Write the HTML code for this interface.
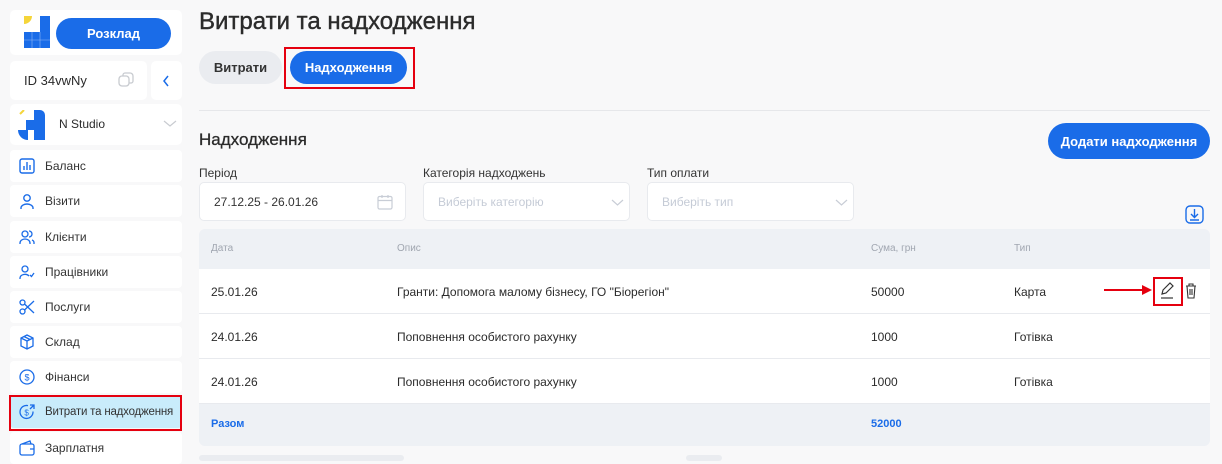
<!DOCTYPE html>
<html><head><meta charset="utf-8"><style>
*{box-sizing:border-box;margin:0;padding:0}
body{width:1222px;height:459px;overflow:hidden;background:#f8f8f9;font-family:"Liberation Sans","DejaVu Sans",sans-serif;color:#2b2b2b;position:relative}
.a{position:absolute}
.card{position:absolute;background:#fff;border-radius:5px}
.mi{position:absolute;left:10px;width:172px;height:32px;background:#fff;border-radius:4px;font-size:12px;color:#333;display:flex;align-items:center;padding-left:35px;white-space:nowrap}
.mi svg{position:absolute;left:9px;top:8px}
.btn{position:absolute;border-radius:18px;display:flex;align-items:center;justify-content:center;font-weight:bold;font-size:13px;white-space:nowrap}
.inp{position:absolute;top:182px;width:207px;height:39px;background:#fff;border:1px solid #e8eaee;border-radius:5px;font-size:12px;display:flex;align-items:center;padding-left:14px}
.lbl{position:absolute;top:166px;font-size:12px;color:#333}
.row{position:absolute;left:199px;width:1011px;height:45px;background:#fff;border-bottom:1px solid #e8eaee;font-size:12px}
.row span{position:absolute;top:16px}
</style></head><body>
<!-- sidebar -->
<div class="card" style="left:10px;top:10px;width:172px;height:45px"></div>
<svg class="a" style="left:24px;top:16px" width="27" height="33" viewBox="0 0 27 33"><path d="M0 0h8a8 8 0 0 1-8 8z" fill="#f5d53a"/><rect x="16" y="0" width="10" height="32" fill="#1a6ce8"/><rect x="0" y="16" width="16" height="16" fill="#1a6ce8"/><path d="M0 24h26M8 16v16M16 16v16" stroke="#fff" stroke-width="0.6" opacity="0.5"/></svg>
<div class="btn" style="left:56px;top:18px;width:115px;height:31px;background:#1a6ce8;color:#fff">Розклад</div>
<div class="card" style="left:10px;top:61px;width:137px;height:39px;font-size:13px;padding:12px 0 0 14px">ID 34vwNy</div>
<svg class="a" style="left:118px;top:72px" width="16" height="16" viewBox="0 0 16 16" fill="none" stroke="#c8cbd0" stroke-width="1.3"><rect x="1" y="4" width="10" height="10" rx="3"/><path d="M5 4V3a2 2 0 0 1 2-2h5a3 3 0 0 1 3 3v5a2 2 0 0 1-2 2h-2"/></svg>
<div class="card" style="left:151px;top:61px;width:31px;height:39px"></div>
<svg class="a" style="left:162px;top:75px" width="8" height="12"><path d="M6 1L2 6l4 5" stroke="#1a6ce8" stroke-width="1.5" fill="none"/></svg>
<div class="card" style="left:10px;top:104px;width:172px;height:41px"></div>
<svg class="a" style="left:18px;top:110px" width="27" height="30" viewBox="0 0 27 30"><path d="M6 0L2 4" stroke="#f5d53a" stroke-width="2"/><path d="M16 0h6a5 5 0 0 1 5 5v25h-11z" fill="#1a6ce8"/><path d="M8 10h8v10H8z" fill="#1a6ce8"/><path d="M0 20h10v10A10 10 0 0 1 0 20z" fill="#1a6ce8"/></svg>
<div class="a" style="left:59px;top:117px;font-size:12px">N Studio</div>
<svg class="a" style="left:163px;top:120px" width="14" height="8"><path d="M1 1l6 5 6-5" stroke="#c8cbd0" stroke-width="1.2" fill="none"/></svg>

<div class="mi" style="top:150px"><svg width="16" height="16" viewBox="0 0 16 16" fill="none" stroke="#1a6ce8" stroke-width="1.4"><rect x="1" y="1" width="14" height="14" rx="2"/><path d="M5 12V8M8 12V4M11 12V7"/></svg>Баланс</div>
<div class="mi" style="top:185px"><svg width="16" height="16" viewBox="0 0 16 16" fill="none" stroke="#1a6ce8" stroke-width="1.4"><circle cx="8" cy="5" r="3.2"/><path d="M2 16v-1a6 4 0 0 1 12 0v1"/></svg>Візити</div>
<div class="mi" style="top:221px"><svg width="16" height="16" viewBox="0 0 16 16" fill="none" stroke="#1a6ce8" stroke-width="1.3"><circle cx="6" cy="5" r="3"/><path d="M1 15v-1a5 4 0 0 1 10 0v1M10 2a3 3 0 0 1 0 6M13 11a3 3 0 0 1 2 3v1"/></svg>Клієнти</div>
<div class="mi" style="top:256px"><svg width="16" height="16" viewBox="0 0 16 16" fill="none" stroke="#1a6ce8" stroke-width="1.3"><circle cx="6" cy="5" r="3"/><path d="M1 15v-1a5 4 0 0 1 9-2M11 11l1.5 1.5L15 9"/></svg>Працівники</div>
<div class="mi" style="top:291px"><svg width="16" height="16" viewBox="0 0 16 16" fill="none" stroke="#1a6ce8" stroke-width="1.3"><circle cx="3.5" cy="3.5" r="2.5"/><circle cx="3.5" cy="12.5" r="2.5"/><path d="M5.5 5L15 14M5.5 11L15 2"/></svg>Послуги</div>
<div class="mi" style="top:326px"><svg width="16" height="16" viewBox="0 0 16 16" fill="none" stroke="#1a6ce8" stroke-width="1.3"><path d="M8 1l6 3v8l-6 3-6-3V4zM2 4l6 3 6-3M8 7v8M5 2.5l6 3"/></svg>Склад</div>
<div class="mi" style="top:361px"><svg width="16" height="16" viewBox="0 0 16 16" fill="none" stroke="#1a6ce8" stroke-width="1.3"><circle cx="8" cy="8" r="7"/><text x="8" y="11.5" font-size="9" text-anchor="middle" fill="#1a6ce8" stroke="none" font-family="Liberation Sans">$</text></svg>Фінанси</div>
<div class="mi" style="top:396px;background:#c9ecfb;font-size:11.5px;letter-spacing:-0.2px"><svg width="16" height="16" viewBox="0 0 16 16" fill="none" stroke="#1a6ce8" stroke-width="1.3"><path d="M14 7.5A6.5 6.5 0 1 1 9 1.6M11 1h4v4M15 1l-4 4"/><text x="7.5" y="11.5" font-size="8" text-anchor="middle" fill="#1a6ce8" stroke="none" font-family="Liberation Sans">$</text></svg>Витрати та надходження</div>
<div class="a" style="left:9px;top:395px;width:173px;height:36px;border:2px solid #e5000f"></div>
<div class="mi" style="top:432px"><svg width="16" height="16" viewBox="0 0 16 16" fill="none" stroke="#1a6ce8" stroke-width="1.3"><rect x="1" y="4" width="14" height="11" rx="2"/><path d="M3 4l8-3 1 3M11 9h4"/></svg>Зарплатня</div>

<!-- main -->
<div class="a" style="left:199px;top:8px;font-size:24px;color:#2b2b2b;-webkit-text-stroke:0.4px #2b2b2b">Витрати та надходження</div>
<div class="btn" style="left:199px;top:51px;width:83px;height:33px;background:#eaecf0;color:#333">Витрати</div>
<div class="btn" style="left:290px;top:51px;width:117px;height:33px;background:#1a6ce8;color:#fff">Надходження</div>
<div class="a" style="left:284px;top:47px;width:131px;height:42px;border:2px solid #e5000f"></div>
<div class="a" style="left:199px;top:110px;width:1011px;height:1px;background:#e6e7ea"></div>
<div class="a" style="left:199px;top:130px;font-size:17px;-webkit-text-stroke:0.3px #2b2b2b">Надходження</div>
<div class="btn" style="left:1048px;top:123px;width:162px;height:36px;background:#1a6ce8;color:#fff">Додати надходження</div>
<div class="lbl" style="left:199px">Період</div>
<div class="lbl" style="left:423px">Категорія надходжень</div>
<div class="lbl" style="left:647px">Тип оплати</div>
<div class="inp" style="left:199px;color:#333">27.12.25 - 26.01.26
<svg class="a" style="left:177px;top:11px" width="16" height="16" viewBox="0 0 16 16" fill="none" stroke="#c8cdd6" stroke-width="1.2"><rect x="1" y="2.5" width="14" height="12.5" rx="1.5"/><path d="M1 6.5h14M5 1v3M11 1v3"/></svg></div>
<div class="inp" style="left:423px;color:#c5cbd6">Виберіть категорію
<svg class="a" style="left:187px;top:16px" width="13" height="8"><path d="M1 1l5.5 5L12 1" stroke="#c8cdd6" stroke-width="1.2" fill="none"/></svg></div>
<div class="inp" style="left:647px;color:#c5cbd6">Виберіть тип
<svg class="a" style="left:187px;top:16px" width="13" height="8"><path d="M1 1l5.5 5L12 1" stroke="#c8cdd6" stroke-width="1.2" fill="none"/></svg></div>
<svg class="a" style="left:1185px;top:205px" width="19" height="19" viewBox="0 0 19 19" fill="none" stroke="#1a6ce8" stroke-width="1.4"><rect x="1" y="1" width="17" height="17" rx="4"/><path d="M9.5 4v8M6 9l3.5 3.5L13 9M5 15h9"/></svg>

<div class="a" style="left:199px;top:229px;width:1011px;height:40px;background:#eef1f5;border-radius:6px 6px 0 0;font-size:10px;color:#a0a6b0">
<span class="a" style="left:12px;top:14px">Дата</span><span class="a" style="left:198px;top:14px">Опис</span><span class="a" style="left:672px;top:14px">Сума, грн</span><span class="a" style="left:815px;top:14px">Тип</span></div>
<div class="row" style="top:269px"><span style="left:12px">25.01.26</span><span style="left:198px">Гранти: Допомога малому бізнесу, ГО "Біорегіон"</span><span style="left:672px">50000</span><span style="left:815px">Карта</span></div>
<div class="row" style="top:314px"><span style="left:12px">24.01.26</span><span style="left:198px">Поповнення особистого рахунку</span><span style="left:672px">1000</span><span style="left:815px">Готівка</span></div>
<div class="row" style="top:359px"><span style="left:12px">24.01.26</span><span style="left:198px">Поповнення особистого рахунку</span><span style="left:672px">1000</span><span style="left:815px">Готівка</span></div>
<div class="a" style="left:199px;top:404px;width:1011px;height:42px;background:#eef1f5;border-radius:0 0 6px 6px;font-size:11px;color:#1a6ce8;font-weight:bold">
<span class="a" style="left:12px;top:14px">Разом</span><span class="a" style="left:672px;top:14px">52000</span></div>
<div class="a" style="left:199px;top:455px;width:205px;height:6px;background:#eaecf0;border-radius:3px"></div>
<div class="a" style="left:686px;top:455px;width:36px;height:6px;background:#eaecf0;border-radius:3px"></div>

<!-- arrow and action icons -->
<svg class="a" style="left:1104px;top:284px" width="50" height="12"><path d="M0 6h40" stroke="#e5000f" stroke-width="2"/><path d="M38 1l10 5-10 5z" fill="#e5000f"/></svg>
<div class="a" style="left:1153px;top:277px;width:30px;height:29px;border:2px solid #e5000f"></div>
<svg class="a" style="left:1159px;top:282px" width="16" height="17" viewBox="0 0 16 17" fill="none" stroke="#333" stroke-width="1.2"><path d="M3 12l1-4 7-7 3 3-7 7z"/><path d="M2 16h12"/></svg>
<svg class="a" style="left:1185px;top:283px" width="12" height="16" viewBox="0 0 12 16" fill="none" stroke="#333" stroke-width="1.1"><path d="M1 3h10M4 3V1h4v2M2 3l1 12h6l1-12M5 6v6M7 6v6"/></svg>
</body></html>
